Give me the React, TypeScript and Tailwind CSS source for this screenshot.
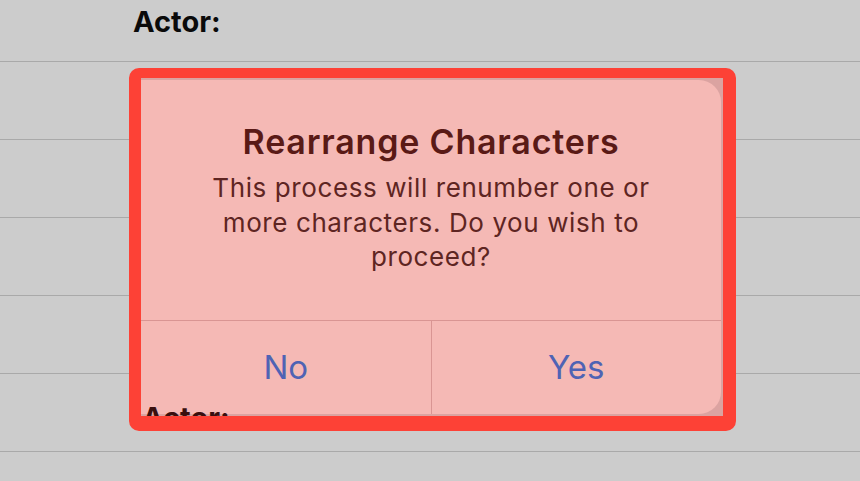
import React from "react";

const font = { fontFamily: "Inter, 'Noto Sans', sans-serif" };

function Row({ children }: { children?: React.ReactNode }) {
  return <div className="h-[78px] border-b border-[#a9a9a9]">{children}</div>;
}

export default function App() {
  return (
    <div className="relative h-[481px] w-[860px] overflow-hidden bg-[#cccccc]" style={font}>
      {/* background list */}
      <div className="h-[62px] border-b border-[#a9a9a9] pl-[133px] pt-[7px]">
        <span className="text-[29px] font-bold leading-none text-[#0a0a0a]">Actor:</span>
      </div>
      <Row />
      <Row />
      <Row />
      <Row />
      <Row />

      {/* highlighted alert */}
      <div className="absolute left-[129px] top-[68px] h-[363px] w-[607px] rounded-[10px] border-[#fd4136] border-l-[12px] border-t-[10px] border-r-[13px] border-b-[15px] bg-[#fd4136]">
        <div className="relative flex h-full flex-col overflow-hidden bg-[#dba3a1] pt-[2px] pr-[2px] pb-[2px]">
          <div className="flex flex-1 flex-col rounded-r-[22px] bg-[#f5b9b5]">
            <div className="flex flex-col items-center pt-[42px] pb-[45px] text-center">
              <h2 className="text-[34px] font-semibold leading-[40px] tracking-[0.8px] text-[#5a1a16]">
                Rearrange Characters
              </h2>
              <p className="mt-[9px] text-[26px] leading-[34.5px] tracking-[0.6px] text-[#5e2522]">
                This process will renumber one or
                <br />
                more characters. Do you wish to
                <br />
                proceed?
              </p>
            </div>
            <div className="flex flex-1 border-t border-[#d99593]">
              <button className="flex flex-1 items-center justify-center border-r border-[#d99593] text-[33px] text-[#4f63b4]">
                No
              </button>
              <button className="flex flex-1 items-center justify-center text-[33px] text-[#4f63b4]">
                Yes
              </button>
            </div>
          </div>
          <span className="absolute left-[1px] top-[325px] z-10 text-[29px] font-bold leading-none text-[#3a0f0e]">
            Actor:
          </span>
        </div>
      </div>
    </div>
  );
}
